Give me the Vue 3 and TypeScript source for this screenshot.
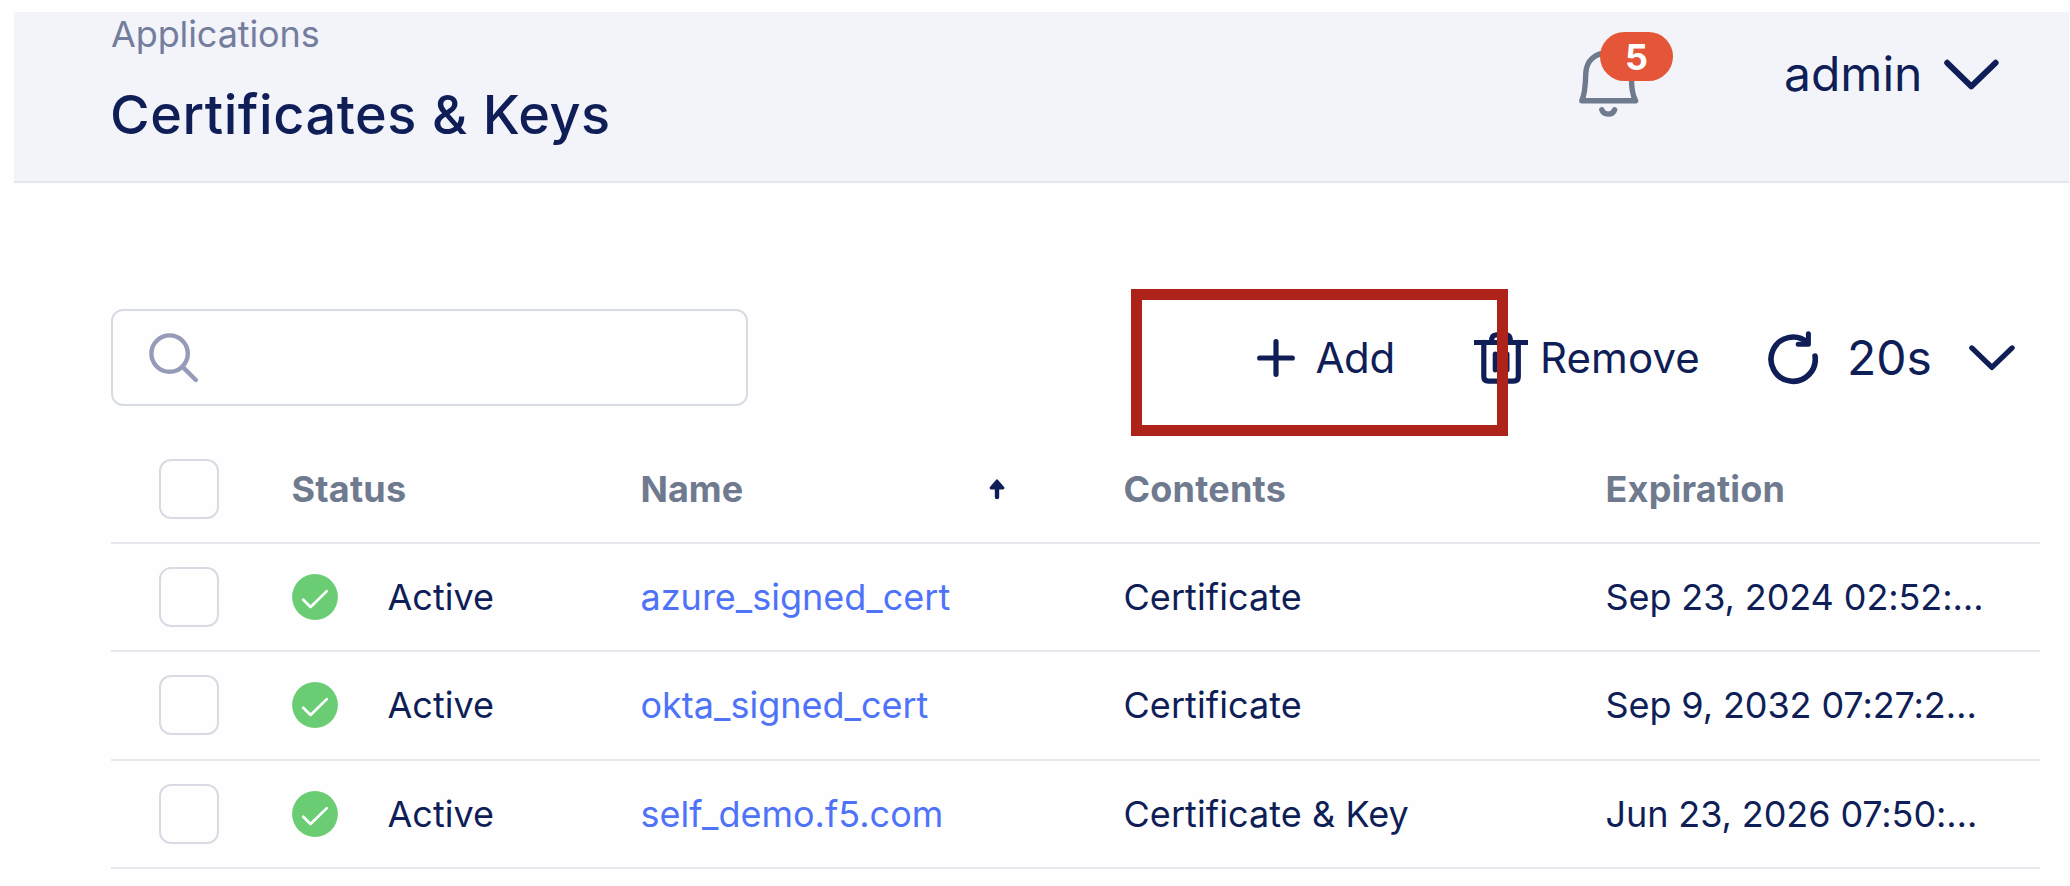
<script setup lang="ts">
interface CertRow {
  status: string
  name: string
  contents: string
  expiration: string
}

const rows: CertRow[] = [
  { status: 'Active', name: 'azure_signed_cert', contents: 'Certificate', expiration: 'Sep 23, 2024 02:52:…' },
  { status: 'Active', name: 'okta_signed_cert', contents: 'Certificate', expiration: 'Sep 9, 2032 07:27:2…' },
  { status: 'Active', name: 'self_demo.f5.com', contents: 'Certificate & Key', expiration: 'Jun 23, 2026 07:50:…' },
]
</script>

<template>
  <div class="page">
    <header class="header">
      <div class="titles">
        <div><span class="crumb">Applications</span></div>
        <h1><span class="title">Certificates &amp; Keys</span></h1>
      </div>
      <div class="bell">
        <svg width="60" height="70" viewBox="0 0 60 70" fill="none" stroke="#6f7a8e" stroke-width="5.4" stroke-linecap="round" stroke-linejoin="round">
          <path d="M2.8 52.8 C5.6 46.8 6.4 41 6.8 25 C7.4 12.5 16 4.8 29.5 4.8 C43 4.8 51.6 12.5 52.2 25 C52.6 41 53.4 46.8 56.6 52.8 Z" />
          <path d="M22.8 61.8 C24.6 67.6 34 67.6 35.6 61.8" />
        </svg>
        <span class="badge">5</span>
      </div>
      <div class="user">
        <span class="admin">admin</span>
        <svg width="55" height="31" viewBox="0 0 55 31" fill="none" stroke="#0f1e57" stroke-width="6" stroke-linecap="round" stroke-linejoin="round">
          <path d="M3.2 3.8 L27.3 27.4 L51.6 3.8" />
        </svg>
      </div>
    </header>

    <section class="toolbar">
      <div class="search">
        <svg width="50" height="50" viewBox="0 0 50 50" fill="none" stroke="#959bb9" stroke-width="4.4">
          <circle cx="20.6" cy="20.6" r="18.2" />
          <path d="M33.4 33.6 L46.8 47" stroke-linecap="round" />
        </svg>
      </div>
      <div class="add">
        <svg width="38" height="38" viewBox="0 0 38 38" fill="none" stroke="#0f1e57" stroke-width="5.2" stroke-linecap="round">
          <path d="M19 2.7 V35.3 M2.7 19 H35.3" />
        </svg>
        <span class="act">Add</span>
        <div class="highlight"></div>
      </div>
      <div class="remove">
        <svg width="54" height="52" viewBox="0 0 54 52" fill="none" stroke="#0f1e57" stroke-width="5.2" stroke-linecap="round" stroke-linejoin="round">
          <path d="M0 10.4 H54" stroke-linecap="butt" stroke-width="5" />
          <path d="M17.6 9.5 C17.6 4.8 19 2.8 22.5 2.8 H31.5 C35 2.8 36.6 4.8 36.6 9.5" />
          <path d="M9.8 10.4 V44.5 C9.8 47.8 11.2 49.2 14.5 49.2 H39.6 C42.9 49.2 44.3 47.8 44.3 44.5 V10.4" />
          <path d="M21.3 22.2 V37.8 M32.9 22.2 V37.8" />
        </svg>
        <span class="act">Remove</span>
      </div>
      <div class="refresh">
        <svg width="50" height="54" viewBox="0 0 50 54" fill="none" stroke="#0f1e57" stroke-width="5.6" stroke-linecap="round" stroke-linejoin="round">
          <path d="M47 25 A22.1 22.1 0 1 1 39.5 11.4" />
          <path d="M40.4 2.8 V13.2 H30.2" stroke-width="5" />
        </svg>
        <span class="secs">20s</span>
        <svg class="chev" width="46" height="26" viewBox="0 0 46 26" fill="none" stroke="#0f1e57" stroke-width="5.2" stroke-linecap="round" stroke-linejoin="round">
          <path d="M2.8 2.9 L22.9 22.4 L43.1 2.9" />
        </svg>
      </div>
    </section>

    <section class="table">
      <div class="row head">
        <span class="check"></span>
        <span class="c-status"><span>Status</span></span>
        <span class="c-name"><span>Name</span>
          <svg width="16" height="21" viewBox="0 0 16 21" fill="none" stroke="#0f1e57" stroke-linecap="round" stroke-linejoin="round">
            <path d="M8 4 V18" stroke-width="4.4" />
            <path d="M8 1.8 L14 9 H2 Z" fill="#0f1e57" stroke-width="2.8" />
          </svg>
        </span>
        <span class="c-contents"><span>Contents</span></span>
        <span class="c-exp"><span>Expiration</span></span>
      </div>
      <div v-for="row in rows" :key="row.name" class="row">
        <span class="check"></span>
        <span class="c-status">
          <svg width="46" height="46" viewBox="0 0 46 46" fill="none">
            <circle cx="23" cy="23" r="22.9" fill="#6acd73" />
            <path d="M11.2 25.7 L18.6 33 L34.8 17.1" stroke="#fff" stroke-width="2.7" stroke-linecap="round" stroke-linejoin="round" />
          </svg>
          <span>{{ row.status }}</span>
        </span>
        <span class="c-name link"><span>{{ row.name }}</span></span>
        <span class="c-contents"><span>{{ row.contents }}</span></span>
        <span class="c-exp"><span>{{ row.expiration }}</span></span>
      </div>
    </section>
  </div>
</template>

<style>
body { background: #fefefe; }
</style>

<style scoped>
.page {
  box-sizing: border-box;
  width: 2070px;
  height: 886px;
  padding: 12px 1px 0 14px;
  overflow: hidden;
  background: #fefefe;
  color: #0f1e57;
  font-family: Inter, "Liberation Sans", sans-serif;
  font-size: 36px;
  white-space: nowrap;
}
svg { display: block; flex: none; }
.header {
  box-sizing: border-box;
  height: 171px;
  display: flex;
  align-items: flex-start;
  background: #f3f4fa;
  border-bottom: 2px solid #e3e6f1;
}
.titles { width: 1565px; padding-left: 97px; box-sizing: border-box; }
.crumb { color: #747d9d; letter-spacing: -0.1px; }
.titles > div { height: 44px; line-height: 44px; }
h1 { margin: 27px 0 0 -1px; font-size: 54px; font-weight: 500; line-height: 64px; letter-spacing: 0.55px; }
.bell { position: relative; width: 60px; padding-top: 36px; }
.badge {
  position: absolute;
  left: 21px;
  top: 20px;
  width: 73px;
  height: 49px;
  border-radius: 24.5px;
  background: #e55537;
  color: #fff;
  font-weight: 700;
  line-height: 50px;
  text-align: center;
}
.user { display: flex; margin-left: 145px; padding-top: 33px; }
.user .admin { width: 160px; font-size: 48px; line-height: 58px; }
.user svg { margin-top: 14px; }
.toolbar { display: flex; margin: 126px 0 0 96.5px; height: 97px; align-items: center; }
.search {
  box-sizing: border-box;
  width: 637px;
  height: 97px;
  padding: 22px 0 0 36.5px;
  border: 2px solid #d7dbe4;
  border-radius: 12px;
}
.add { position: relative; display: flex; align-items: center; margin-left: 509px; width: 217px; }
.act { font-size: 42px; line-height: 52px; padding-top: 1px; letter-spacing: -0.4px; }
.add .act { margin-left: 21px; }
.highlight {
  position: absolute;
  left: -126px;
  top: -42px;
  box-sizing: border-box;
  width: 377px;
  height: 147px;
  border: 11px solid #ae2319;
  z-index: 1;
}
.remove { display: flex; align-items: center; width: 294px; }
.remove .act { margin-left: 12.5px; letter-spacing: 0.1px; }
.refresh { display: flex; align-items: center; }
.secs { font-size: 48px; line-height: 58px; width: 121.5px; margin-left: 29.5px; }
.table { margin: 30px 0 0 96.5px; width: 1929px; }
.row {
  box-sizing: border-box;
  height: 108.3px;
  display: flex;
  align-items: center;
  border-bottom: 2px solid #e7e8ee;
}
.row.head { height: 108px; }
.check {
  box-sizing: border-box;
  width: 60px;
  height: 60px;
  margin-left: 48px;
  border: 2px solid #d8dbe4;
  border-radius: 12px;
}
.c-status { display: flex; align-items: center; width: 349px; margin-left: 73px; }
.c-status svg { margin-right: 50px; }
.c-name { display: flex; align-items: center; width: 483px; }
.c-name svg { margin-left: 246px; }
.c-contents { width: 482px; }
.link { color: #4f73f8; }
.row:not(.head) .c-contents { letter-spacing: 0.07px; }
.row:not(.head) .c-exp { letter-spacing: -0.1px; }
.head { color: #6f7a8e; font-weight: 700; }
.head .c-contents, .head .c-exp, .head .c-status { letter-spacing: 0.2px; }
</style>
